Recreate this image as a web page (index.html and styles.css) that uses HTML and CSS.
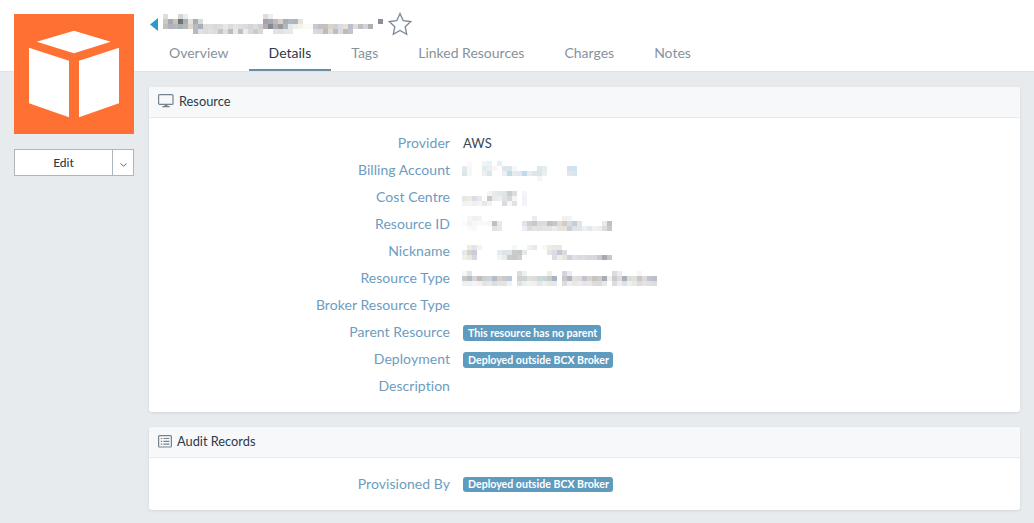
FILE: index.html
```html
<!DOCTYPE html>
<html lang="en">
<head>
<meta charset="utf-8">
<title>Resource details</title>
<link rel="stylesheet" href="styles.css">
</head>
<body>
<header class="topbar">
  <div class="title-row">
    <svg class="back" width="8" height="13" viewBox="0 0 8 13"><path d="M8 0V13L0 6.5Z"/></svg>
    <svg class="mosaic title-blur" width="220" height="20" viewBox="0 0 220 20">
      <rect x="0" y="0" fill="#dedede"/><rect x="15" y="0" fill="#d8d6d2"/><rect x="20" y="0" fill="#e8ecec"/><rect x="100" y="0" fill="#dfdcdc"/><rect x="105" y="0" fill="#eeeeee"/>
      <rect x="0" y="5" fill="#c9c9c5"/><rect x="5" y="5" fill="#a9a9ad"/><rect x="10" y="5" fill="#c3c3c0"/><rect x="15" y="5" fill="#707272"/><rect x="20" y="5" fill="#aab0b0"/><rect x="25" y="5" fill="#dde3df"/><rect x="30" y="5" fill="#a9adb1"/><rect x="35" y="5" fill="#dadada"/>
      <rect x="100" y="5" fill="#a89fac"/><rect x="105" y="5" fill="#a8a8ae"/><rect x="110" y="5" fill="#c4b9b9"/><rect x="115" y="5" fill="#d4d0d0"/><rect x="120" y="5" fill="#adadb0"/><rect x="125" y="5" fill="#a9b9c6"/><rect x="130" y="5" fill="#b4b4ac"/><rect x="135" y="5" fill="#e4e4e4"/><rect x="215" y="5" fill="#8d8d9b"/>
      <rect x="0" y="10" fill="#c0c0b8"/><rect x="5" y="10" fill="#b0b0c8"/><rect x="10" y="10" fill="#b4b8b8"/><rect x="15" y="10" fill="#a8b0b0"/><rect x="20" y="10" fill="#b4baba"/><rect x="25" y="10" fill="#e0d4cc"/><rect x="30" y="10" fill="#b4bcc0"/><rect x="35" y="10" fill="#a8aeb4"/><rect x="40" y="10" fill="#dcdcdc"/><rect x="45" y="10" fill="#dedee0"/><rect x="50" y="10" fill="#d8d8d8"/><rect x="55" y="10" fill="#dcdcd8"/><rect x="60" y="10" fill="#e4e8e8"/><rect x="65" y="10" fill="#dcdce0"/><rect x="70" y="10" fill="#e4e4e0"/><rect x="75" y="10" fill="#d8e0e4"/><rect x="80" y="10" fill="#dcdcdc"/><rect x="85" y="10" fill="#d4d4d8"/><rect x="90" y="10" fill="#dcdcdc"/><rect x="95" y="10" fill="#d0d0d0"/>
      <rect x="100" y="10" fill="#b8a8b0"/><rect x="105" y="10" fill="#828894"/><rect x="110" y="10" fill="#aeaeb2"/><rect x="115" y="10" fill="#9a9a9e"/><rect x="120" y="10" fill="#b0b8c0"/><rect x="125" y="10" fill="#e8e8e8"/><rect x="130" y="10" fill="#eeeeee"/><rect x="135" y="10" fill="#f4f4ec"/><rect x="140" y="10" fill="#fbfbf6"/><rect x="145" y="10" fill="#fafaf4"/><rect x="150" y="10" fill="#c8c8d0"/><rect x="155" y="10" fill="#c0c0c4"/><rect x="160" y="10" fill="#c8c0b8"/><rect x="165" y="10" fill="#d8d4cc"/><rect x="170" y="10" fill="#d0d0d0"/><rect x="175" y="10" fill="#d8dce8"/><rect x="180" y="10" fill="#e8e0d0"/><rect x="185" y="10" fill="#b8c0c8"/><rect x="190" y="10" fill="#e0dcdc"/><rect x="195" y="10" fill="#c0c0c0"/><rect x="200" y="10" fill="#d0d4dc"/><rect x="205" y="10" fill="#b0b0b0"/>
      <rect x="30" y="15" fill="#bababa"/><rect x="35" y="15" fill="#e0e0e8"/><rect x="40" y="15" fill="#dcdcdc"/><rect x="45" y="15" fill="#e0e0e0"/><rect x="50" y="15" fill="#dcdcdc"/><rect x="55" y="15" fill="#c4c4c4"/><rect x="60" y="15" fill="#e0e0e4"/><rect x="65" y="15" fill="#bcbcc0"/><rect x="70" y="15" fill="#e8e8e8"/><rect x="75" y="15" fill="#c0c0c4"/><rect x="80" y="15" fill="#e8ecec"/><rect x="85" y="15" fill="#d8d8d8"/><rect x="90" y="15" fill="#cccccc"/><rect x="95" y="15" fill="#d8d8d8"/>
      <rect x="110" y="15" fill="#e0e4e8"/><rect x="115" y="15" fill="#e4e0dc"/><rect x="120" y="15" fill="#e4e8e8"/><rect x="125" y="15" fill="#e8e8ec"/><rect x="150" y="15" fill="#d8d8e0"/><rect x="155" y="15" fill="#d8d8d8"/><rect x="160" y="15" fill="#bcbcc0"/><rect x="165" y="15" fill="#dcdcdc"/><rect x="170" y="15" fill="#bcc0bc"/><rect x="175" y="15" fill="#dcdcdc"/><rect x="180" y="15" fill="#bcbcb8"/><rect x="185" y="15" fill="#c0c4cc"/>
    </svg>
    <svg class="star" width="24" height="24" viewBox="0 0 24 24"><path d="M12 1.6 15.2 8.6 22.8 9.5 17.2 14.7 18.7 22.2 12 18.4 5.3 22.2 6.8 14.7 1.2 9.5 8.8 8.6Z"/></svg>
  </div>
  <nav class="tabs">
    <a class="tab">Overview</a>
    <a class="tab active">Details</a>
    <a class="tab">Tags</a>
    <a class="tab">Linked Resources</a>
    <a class="tab">Charges</a>
    <a class="tab">Notes</a>
  </nav>
</header>

<div class="page">
  <aside class="side">
    <div class="logo">
      <svg width="120" height="120" viewBox="0 0 120 120"><path d="M22.7 27.7 60 16.7 96.7 27.7 60 39.3Z"/><path d="M15 33.7 55 46.7V103.3L15 89.3Z"/><path d="M65 46.7 105 33.7V89.3L65 103.3Z"/></svg>
    </div>
    <div class="edit-group">
      <button class="edit-btn">Edit</button>
      <button class="edit-caret"><svg width="7" height="4" viewBox="0 0 7 4"><path d="M.5.5 3.500 3.200 6.500.5"/></svg></button>
    </div>
  </aside>

  <main class="content">
    <section class="panel">
      <h2 class="panel-head">
        <svg class="head-icon" width="16" height="14" viewBox="0 0 16 14"><rect x=".6" y=".6" width="14.400" height="9.800" rx="1"/><path class="solid" d="M6.500 11h3v1h2.200v1.300H4.300V12h2.200Z"/></svg>
        Resource
      </h2>
      <div class="rows rows-first">
        <div class="label">Provider</div><div class="value">AWS</div>
        <div class="label">Billing Account</div>
        <div class="value blur-cell">
          <svg class="mosaic drop-5" width="120" height="20" viewBox="0 0 120 20">
            <rect x="5" y="0" fill="#fafafa"/><rect x="20" y="0" fill="#eef4f8"/><rect x="25" y="0" fill="#e6f2f6"/><rect x="35" y="0" fill="#e4f2f6"/>
            <rect x="0" y="5" fill="#e6e8ec"/><rect x="5" y="5" fill="#f8f8f8"/><rect x="20" y="5" fill="#e4ecf0"/><rect x="25" y="5" fill="#e8f0f4"/><rect x="30" y="5" fill="#fbf6f4"/><rect x="40" y="5" fill="#dde6ee"/><rect x="45" y="5" fill="#dde4ec"/><rect x="50" y="5" fill="#f4f6f8"/><rect x="75" y="5" fill="#dde8ec"/><rect x="80" y="5" fill="#e4eef0"/><rect x="105" y="5" fill="#d4e0ec"/><rect x="110" y="5" fill="#d0e4f0"/>
            <rect x="0" y="10" fill="#dae6ec"/><rect x="5" y="10" fill="#f6f8f8"/><rect x="20" y="10" fill="#eceef2"/><rect x="25" y="10" fill="#d4e8f0"/><rect x="40" y="10" fill="#eeeef2"/><rect x="45" y="10" fill="#bcdee8"/><rect x="50" y="10" fill="#e4eaf0"/><rect x="55" y="10" fill="#e4e8ee"/><rect x="60" y="10" fill="#bcdcea"/><rect x="65" y="10" fill="#e8ecf0"/><rect x="70" y="10" fill="#dce6ea"/><rect x="75" y="10" fill="#dce6ea"/><rect x="80" y="10" fill="#e8f0f2"/><rect x="105" y="10" fill="#e4e4ee"/><rect x="110" y="10" fill="#d4e6f0"/>
            <rect x="75" y="15" fill="#f2f6f6"/>
          </svg>
        </div>
        <div class="label">Cost Centre</div>
        <div class="value blur-cell">
          <svg class="mosaic drop-8" width="70" height="15" viewBox="0 0 70 15">
            <rect x="25" y="0" fill="#f4f4f6"/><rect x="30" y="0" fill="#eaeaee"/><rect x="35" y="0" fill="#e2e8e8"/><rect x="40" y="0" fill="#e0e4e4"/><rect x="45" y="0" fill="#cccccc"/><rect x="50" y="0" fill="#dcdcdc"/><rect x="60" y="0" fill="#f4f6fa"/>
            <rect x="0" y="5" fill="#e8e8e0"/><rect x="5" y="5" fill="#ecece4"/><rect x="10" y="5" fill="#dcdce4"/><rect x="15" y="5" fill="#e8e8e8"/><rect x="25" y="5" fill="#cfc6ca"/><rect x="30" y="5" fill="#e6eaec"/><rect x="35" y="5" fill="#eaf0f0"/><rect x="40" y="5" fill="#dde4e8"/><rect x="45" y="5" fill="#d8d8d8"/><rect x="50" y="5" fill="#f4f4f4"/><rect x="60" y="5" fill="#f0f4f8"/>
            <rect x="0" y="10" fill="#f2f2f0"/><rect x="5" y="10" fill="#f4f4f4"/><rect x="10" y="10" fill="#f0f0f4"/><rect x="15" y="10" fill="#f4f4f4"/><rect x="20" y="10" fill="#e8e8e8"/><rect x="25" y="10" fill="#f2f2f6"/><rect x="40" y="10" fill="#dcdcdc"/><rect x="45" y="10" fill="#f4f8fa"/><rect x="50" y="10" fill="#e2e2e2"/><rect x="60" y="10" fill="#f2f4f8"/>
          </svg>
        </div>
        <div class="label">Resource ID</div>
        <div class="value blur-cell">
          <svg class="mosaic drop-6" width="150" height="15" viewBox="0 0 150 15">
            <rect x="5" y="0" fill="#f6f6f6"/><rect x="10" y="0" fill="#f0f0f0"/><rect x="15" y="0" fill="#eef4f8"/><rect x="70" y="0" fill="#ecebf2"/><rect x="100" y="0" fill="#f4f0ec"/><rect x="105" y="0" fill="#eef4f8"/>
            <rect x="0" y="5" fill="#fafafa"/><rect x="5" y="5" fill="#f2f2f2"/><rect x="10" y="5" fill="#f8f8f8"/><rect x="15" y="5" fill="#f8fafa"/><rect x="20" y="5" fill="#f8fafc"/><rect x="25" y="5" fill="#f6f6f6"/><rect x="30" y="5" fill="#bcc0c2"/><rect x="35" y="5" fill="#e8e8e8"/><rect x="60" y="5" fill="#e2e4ec"/><rect x="65" y="5" fill="#d0d0d4"/><rect x="70" y="5" fill="#c8c8cc"/><rect x="75" y="5" fill="#dcdcdc"/><rect x="80" y="5" fill="#dcdcdc"/><rect x="85" y="5" fill="#c0c0ca"/><rect x="90" y="5" fill="#ccc4c8"/><rect x="95" y="5" fill="#dcdcdc"/><rect x="100" y="5" fill="#d4ccc4"/><rect x="105" y="5" fill="#d8dde4"/><rect x="110" y="5" fill="#c8ccd4"/><rect x="115" y="5" fill="#e4e4e4"/><rect x="140" y="5" fill="#e8e8e8"/><rect x="145" y="5" fill="#c0c0c4"/>
            <rect x="5" y="10" fill="#fafafa"/><rect x="10" y="10" fill="#f8f8f8"/><rect x="30" y="10" fill="#e2e4e4"/><rect x="35" y="10" fill="#e8e8e8"/><rect x="60" y="10" fill="#ecf0f4"/><rect x="65" y="10" fill="#dcdcdc"/><rect x="70" y="10" fill="#e2e4e6"/><rect x="75" y="10" fill="#dfe2e4"/><rect x="80" y="10" fill="#e4e4e4"/><rect x="85" y="10" fill="#e4e4e4"/><rect x="90" y="10" fill="#ecebe6"/><rect x="95" y="10" fill="#e4e4e2"/><rect x="100" y="10" fill="#e8e4d8"/><rect x="105" y="10" fill="#c8d0d8"/><rect x="110" y="10" fill="#dce4e8"/><rect x="115" y="10" fill="#dfe6e8"/><rect x="120" y="10" fill="#ecf0f2"/><rect x="125" y="10" fill="#e4e8e8"/><rect x="130" y="10" fill="#f0f2f2"/><rect x="135" y="10" fill="#eeeeee"/><rect x="140" y="10" fill="#dcdce0"/><rect x="145" y="10" fill="#c8c8cc"/>
          </svg>
        </div>
        <div class="label">Nickname</div>
        <div class="value blur-cell">
          <svg class="mosaic drop-8" width="150" height="15" viewBox="0 0 150 15">
            <rect x="5" y="0" fill="#ecece4"/><rect x="10" y="0" fill="#e4e4e0"/><rect x="15" y="0" fill="#f0f4f8"/><rect x="50" y="0" fill="#f4f6f6"/><rect x="65" y="0" fill="#f0f0f4"/><rect x="70" y="0" fill="#e8e8f0"/><rect x="80" y="0" fill="#f8f8f6"/><rect x="85" y="0" fill="#ecebe6"/><rect x="90" y="0" fill="#e8e8e4"/><rect x="95" y="0" fill="#e8e8e8"/>
            <rect x="0" y="5" fill="#e8e8e4"/><rect x="5" y="5" fill="#d4d4c8"/><rect x="10" y="5" fill="#d0c8dc"/><rect x="35" y="5" fill="#e4ecf2"/><rect x="40" y="5" fill="#dfe4e4"/><rect x="45" y="5" fill="#e0e4e4"/><rect x="50" y="5" fill="#c8cccc"/><rect x="55" y="5" fill="#c4c8c8"/><rect x="60" y="5" fill="#e8e8e8"/><rect x="85" y="5" fill="#e4e4e0"/><rect x="90" y="5" fill="#dcdce4"/><rect x="95" y="5" fill="#c4c8d0"/><rect x="100" y="5" fill="#dcdce0"/>
            <rect x="0" y="10" fill="#f0f0e8"/><rect x="5" y="10" fill="#e8e8e0"/><rect x="10" y="10" fill="#dcd4e4"/><rect x="35" y="10" fill="#f0f4f6"/><rect x="40" y="10" fill="#e8ecec"/><rect x="45" y="10" fill="#c8cccc"/><rect x="50" y="10" fill="#c8c8c8"/><rect x="55" y="10" fill="#d0d0d0"/><rect x="90" y="10" fill="#dcdce4"/><rect x="95" y="10" fill="#eceff2"/><rect x="100" y="10" fill="#e8e4d8"/><rect x="105" y="10" fill="#cdd4d8"/><rect x="110" y="10" fill="#dfe2e4"/><rect x="115" y="10" fill="#d8dce0"/><rect x="120" y="10" fill="#dcdcdc"/><rect x="125" y="10" fill="#d4d8dc"/><rect x="130" y="10" fill="#d8d8d8"/><rect x="135" y="10" fill="#c8c8d0"/><rect x="140" y="10" fill="#a8a8b0"/><rect x="145" y="10" fill="#c8c8cc"/>
          </svg>
        </div>
        <div class="label">Resource Type</div>
        <div class="value blur-cell">
          <svg class="mosaic drop-7" width="195" height="15" viewBox="0 0 195 15">
            <rect x="0" y="0" fill="#f8f6f0"/><rect x="5" y="0" fill="#dde4ea"/><rect x="55" y="0" fill="#dcdcdc"/><rect x="60" y="0" fill="#ecf0f0"/><rect x="85" y="0" fill="#ecf0ec"/><rect x="100" y="0" fill="#d8d4d8"/><rect x="105" y="0" fill="#ecebf4"/><rect x="150" y="0" fill="#dcdcdc"/><rect x="155" y="0" fill="#ecebf2"/><rect x="175" y="0" fill="#f6f6f8"/>
            <rect x="0" y="5" fill="#c8c8c8"/><rect x="5" y="5" fill="#b4bcc8"/><rect x="10" y="5" fill="#d8d4d4"/><rect x="15" y="5" fill="#c4bcbc"/><rect x="20" y="5" fill="#c8d0d0"/><rect x="25" y="5" fill="#ccd4d4"/><rect x="30" y="5" fill="#b4bcc8"/><rect x="35" y="5" fill="#d4d0d0"/><rect x="40" y="5" fill="#ccc8c8"/><rect x="45" y="5" fill="#b8c8d8"/>
            <rect x="55" y="5" fill="#d0d0d0"/><rect x="60" y="5" fill="#ccd4d4"/><rect x="65" y="5" fill="#dde0dc"/><rect x="70" y="5" fill="#dddcd8"/><rect x="75" y="5" fill="#c8d8dc"/><rect x="80" y="5" fill="#cdd4d4"/><rect x="85" y="5" fill="#c4ccc4"/><rect x="90" y="5" fill="#a8b4bc"/>
            <rect x="100" y="5" fill="#c8c8c8"/><rect x="105" y="5" fill="#b4b4c0"/><rect x="110" y="5" fill="#e0e0e0"/><rect x="115" y="5" fill="#dcdcdc"/><rect x="120" y="5" fill="#c8c0cc"/><rect x="125" y="5" fill="#d4d4d4"/><rect x="130" y="5" fill="#c8c4c0"/><rect x="135" y="5" fill="#cccccc"/><rect x="140" y="5" fill="#a8acb0"/><rect x="145" y="5" fill="#eef2f4"/>
            <rect x="150" y="5" fill="#cccccc"/><rect x="155" y="5" fill="#dcdce0"/><rect x="160" y="5" fill="#a8b0b8"/><rect x="165" y="5" fill="#dcdcdc"/><rect x="170" y="5" fill="#e0e0dc"/><rect x="175" y="5" fill="#c8c8cc"/><rect x="180" y="5" fill="#dcdcdc"/><rect x="185" y="5" fill="#c4c4c8"/><rect x="190" y="5" fill="#b8c0cc"/>
            <rect x="0" y="10" fill="#f0f0f0"/><rect x="5" y="10" fill="#f0f0f2"/><rect x="10" y="10" fill="#f4f4f4"/><rect x="15" y="10" fill="#f0f0f0"/><rect x="20" y="10" fill="#e4e4e4"/><rect x="25" y="10" fill="#e8e8e8"/><rect x="30" y="10" fill="#dcdce4"/><rect x="35" y="10" fill="#e4e4e4"/><rect x="40" y="10" fill="#e4e4e4"/><rect x="45" y="10" fill="#ecf2f6"/>
            <rect x="55" y="10" fill="#e0e0e0"/><rect x="60" y="10" fill="#eeeeee"/><rect x="65" y="10" fill="#f6f2ee"/><rect x="70" y="10" fill="#f4f0e8"/><rect x="75" y="10" fill="#e0e8ec"/><rect x="80" y="10" fill="#ecf0f0"/><rect x="85" y="10" fill="#e8e8e4"/><rect x="90" y="10" fill="#e4e8ec"/>
            <rect x="100" y="10" fill="#dcdcdc"/><rect x="105" y="10" fill="#eeeeee"/><rect x="110" y="10" fill="#e8e8e8"/><rect x="115" y="10" fill="#ececec"/><rect x="120" y="10" fill="#e8e4e8"/><rect x="125" y="10" fill="#e8e8e8"/><rect x="130" y="10" fill="#dcdcdc"/><rect x="135" y="10" fill="#dcdcdc"/><rect x="140" y="10" fill="#e4e8ea"/>
            <rect x="150" y="10" fill="#dcdcdc"/><rect x="155" y="10" fill="#eeeeee"/><rect x="160" y="10" fill="#dde0e4"/><rect x="165" y="10" fill="#eeeeee"/><rect x="170" y="10" fill="#e8e8e8"/><rect x="175" y="10" fill="#dcdcdc"/><rect x="180" y="10" fill="#e4e4e8"/><rect x="185" y="10" fill="#e0e0e0"/><rect x="190" y="10" fill="#dcdce0"/>
          </svg>
        </div>
        <div class="label">Broker Resource Type</div><div class="value"></div>
        <div class="label">Parent Resource</div><div class="value"><span class="badge">This resource has no parent</span></div>
        <div class="label">Deployment</div><div class="value"><span class="badge">Deployed outside BCX Broker</span></div>
        <div class="label">Description</div><div class="value"></div>
      </div>
    </section>

    <section class="panel">
      <h2 class="panel-head">
        <svg class="head-icon" width="14" height="13" viewBox="0 0 14 13"><rect x=".6" y=".6" width="12.800" height="11.400" rx="1"/><path d="M2.800 3.500h1.400M2.800 6.300h1.400M2.800 9.100h1.400M5.400 3.500h6M5.400 6.300h6M5.400 9.100h6"/></svg>
        Audit Records
      </h2>
      <div class="rows">
        <div class="label">Provisioned By</div><div class="value"><span class="badge badge-short">Deployed outside BCX Broker</span></div>
      </div>
    </section>
  </main>
</div>
</body>
</html>
```

FILE: styles.css
```css
* { box-sizing: border-box; }

html, body { height: 100%; }

body {
  margin: 0;
  overflow: hidden;
  background: #e8ebee;
  color: #2b3a4a;
  font-family: Lato, "Open Sans", sans-serif;
  font-size: 14px;
}

.topbar {
  height: 72px;
  padding-left: 150px;
  background: #fff;
  border-bottom: 1px solid #dfe3e6;
}

.title-row {
  display: flex;
  align-items: center;
  height: 34px;
  padding-top: 14px;
}

.back { flex: none; fill: #2a9cc6; margin-right: 5px; }
.title-blur { flex: none; }
.star { flex: none; fill: none; stroke: #76889a; stroke-width: 1.300; margin-left: 5px; }

.mosaic { display: block; shape-rendering: crispEdges; }
.mosaic rect { width: 5px; height: 5px; }

.tabs {
  display: flex;
  margin-top: 2px;
  margin-left: -1px;
}

.tab {
  height: 35px;
  padding: 8px 20px 0;
  color: #87929c;
  font-size: 14px;
  line-height: 18px;
}

.tab.active {
  color: #2b3a4a;
  border-bottom: 2px solid #6a8da3;
}

.page { display: flex; }

.side {
  flex: none;
  width: 120px;
  margin: -58px 15px 0 14px;
  position: relative;
}

.logo { height: 120px; background: #ff7033; }
.logo svg { display: block; fill: #fff; }

.edit-group { display: flex; height: 27px; margin-top: 15px; }

.edit-btn, .edit-caret {
  height: 27px;
  padding: 0;
  background: #fff;
  border: 1px solid #adb5bd;
  color: #2b3a4a;
  font: 500 12px Lato, sans-serif;
}

.edit-btn { flex: 1; }
.edit-caret { width: 22px; margin-left: -1px; }
.edit-caret svg { fill: none; stroke: #5f6b76; }

.content {
  flex: 1;
  padding: 15px 14px 0 0;
}

.panel {
  margin-bottom: 15px;
  background: #fff;
  border-radius: 3px;
  box-shadow: 0 1px 3px rgba(60, 75, 90, .12);
  overflow: hidden;
}

.panel-head {
  display: flex;
  align-items: center;
  gap: 5px;
  height: 31px;
  margin: 0;
  padding: 0 0 2px 9px;
  background: #f7f8fa;
  border-bottom: 1px solid #e8eaec;
  color: #2b3a4a;
  font-size: 12.800px;
  font-weight: 400;
}

.head-icon { fill: none; stroke: #75838f; stroke-width: 1.200; }
.head-icon .solid { fill: #75838f; stroke: none; }

.rows {
  display: grid;
  grid-template-columns: 301px 1fr;
  grid-auto-rows: 27px;
  column-gap: 13px;
  padding: 12px 0 13px;
  align-items: center;
}

.rows-first { padding-top: 11px; }

.label {
  text-align: right;
  color: #6d9cc0;
  font-size: 14px;
  letter-spacing: .05px;
}

.value {
  min-height: 20px;
  display: flex;
  align-items: center;
  color: #3a4856;
  font-size: 13px;
}

.blur-cell { align-self: start; margin-left: -1px; }
.drop-5 { margin-top: 5px; }
.drop-6 { margin-top: 6px; }
.drop-7 { margin-top: 7px; }
.drop-8 { margin-top: 8px; }

.badge {
  height: 16px;
  margin-top: 2px;
  padding: 0 4px 0 5px;
  background: #5f9abf;
  border-radius: 3px;
  color: #fff;
  font-size: 10.600px;
  font-weight: 700;
  line-height: 16px;
}

.badge-short { height: 15px; line-height: 15px; }
```
